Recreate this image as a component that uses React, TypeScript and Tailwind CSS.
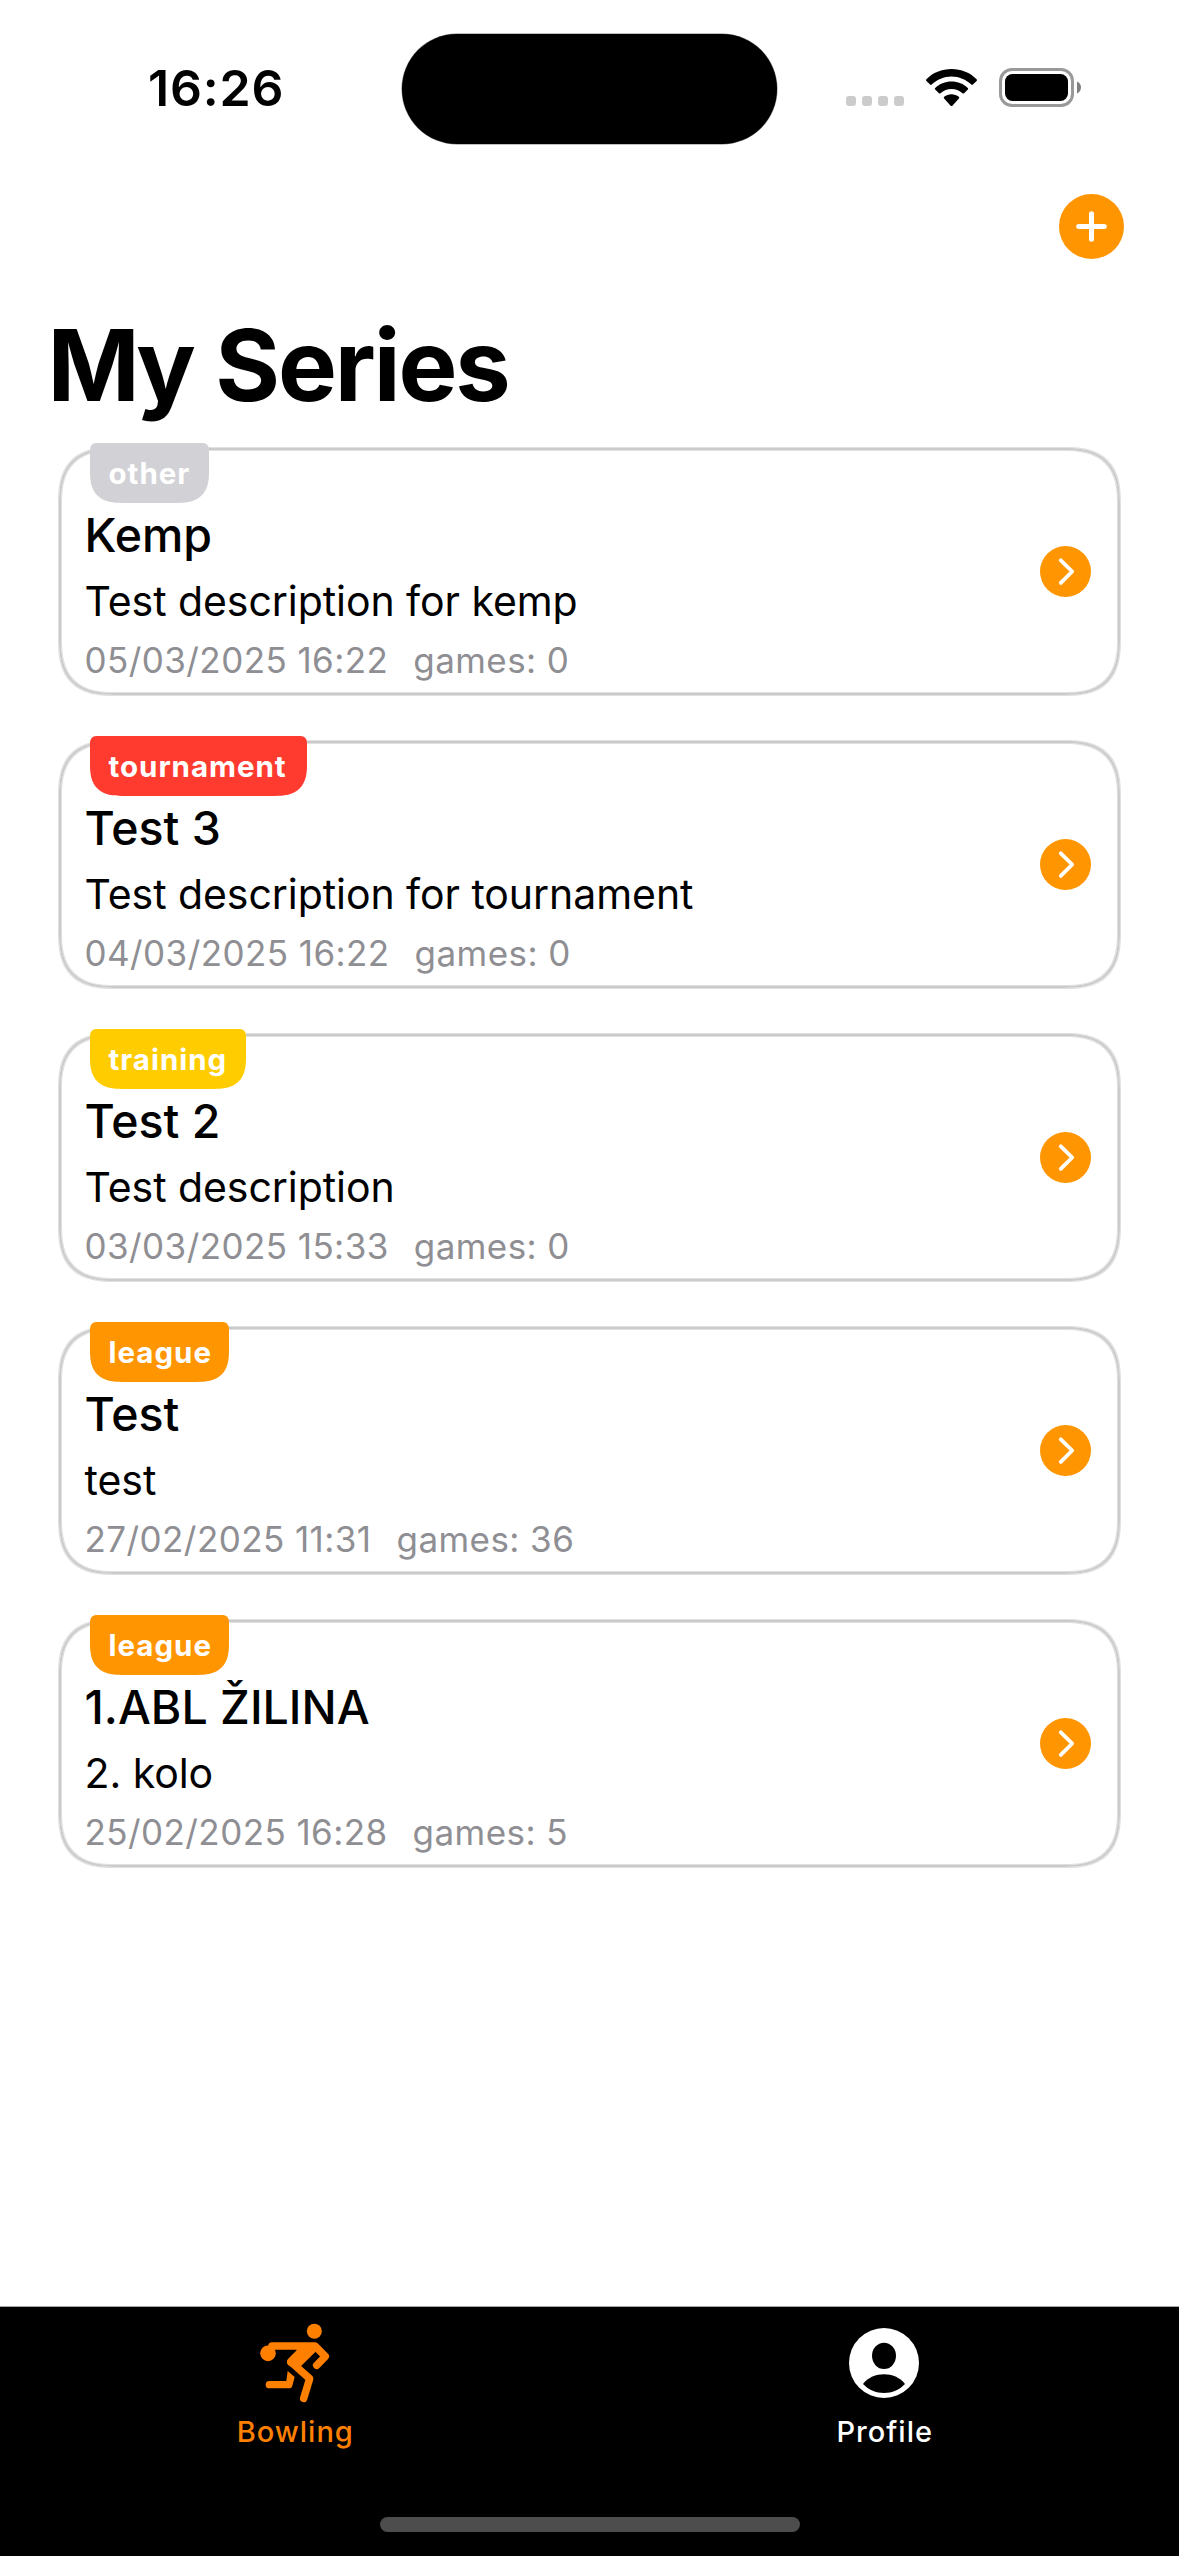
import type { ReactNode } from "react";

type Series = {
  kind: string;
  badge: string;
  title: string;
  description: string;
  date: string;
  games: number;
};

const SERIES: Series[] = [
  {
    kind: "other",
    badge: "w-[119px] bg-[#d1d1d6]",
    title: "Kemp",
    description: "Test description for kemp",
    date: "05/03/2025 16:22",
    games: 0,
  },
  {
    kind: "tournament",
    badge: "w-[217px] bg-[#ff3b30]",
    title: "Test 3",
    description: "Test description for tournament",
    date: "04/03/2025 16:22",
    games: 0,
  },
  {
    kind: "training",
    badge: "w-[156px] bg-[#ffcc00]",
    title: "Test 2",
    description: "Test description",
    date: "03/03/2025 15:33",
    games: 0,
  },
  {
    kind: "league",
    badge: "w-[139px] bg-[#ff9500]",
    title: "Test",
    description: "test",
    date: "27/02/2025 11:31",
    games: 36,
  },
  {
    kind: "league",
    badge: "w-[139px] bg-[#ff9500]",
    title: "1.ABL ŽILINA",
    description: "2. kolo",
    date: "25/02/2025 16:28",
    games: 5,
  },
];

function WifiIcon() {
  return (
    <svg className="h-[38px] w-[51px]" viewBox="0 0 51 38" fill="black">
      <path d="M25.5 0C35.2 0 44.2 3.7 50.6 10.2c.5.5.5 1.2 0 1.7l-3.7 3.7c-.4.4-1.1.4-1.6 0C40 10.400 33 7.400 25.500 7.400S11 10.400 5.700 15.600c-.5.4-1.200.4-1.600 0L.4 11.900c-.5-.5-.5-1.200 0-1.700C6.800 3.700 15.800 0 25.500 0Z" />
      <path d="M25.500 12.600c6.300 0 12 2.400 16.300 6.300.5.500.5 1.200 0 1.700l-3.700 3.700c-.4.4-1.100.4-1.600 0a16.400 16.400 0 0 0-22 0c-.5.4-1.200.4-1.600 0l-3.700-3.700c-.5-.5-.5-1.200 0-1.700 4.300-3.900 10-6.300 16.300-6.300Z" />
      <path d="M25.500 25.300c2.800 0 5.300.9 7.300 2.500.5.400.5 1.200.1 1.700l-6.500 7.200c-.5.500-1.300.5-1.800 0l-6.500-7.200c-.4-.5-.4-1.300.1-1.700 2-1.600 4.500-2.500 7.300-2.500Z" />
    </svg>
  );
}

function BatteryIcon() {
  return (
    <svg className="h-[39px] w-[82px]" viewBox="0 0 82 39">
      <rect x="1.5" y="1.500" width="72" height="36" rx="11.500" fill="none" stroke="#999" strokeWidth="3" />
      <rect x="6" y="6" width="63" height="27" rx="7.500" fill="black" />
      <path d="M78 13.500c2.400 1 4 3.300 4 6s-1.600 5-4 6Z" fill="#808080" />
    </svg>
  );
}

function StatusBar() {
  return (
    <header className="flex h-[177px] items-start">
      <div className="w-[402px] pl-[148px] pt-[58px] text-[50px] font-semibold leading-[60px] tracking-[0.850px]">
        16:26
      </div>
      <div className="mt-[34px] h-[110px] w-[375px] rounded-full bg-black shadow-[0_0_0_0.500px_rgba(0,0,0,0.5)]" />
      <div className="flex pl-[69px] pt-[68px]">
        <div className="flex gap-[6px] pt-[28px]">
          <span className="size-[10px] rounded-[3px] bg-[#ccc]" />
          <span className="size-[10px] rounded-[3px] bg-[#ccc]" />
          <span className="size-[10px] rounded-[3px] bg-[#ccc]" />
          <span className="size-[10px] rounded-[3px] bg-[#ccc]" />
        </div>
        <div className="ml-[22px] pt-px">
          <WifiIcon />
        </div>
        <div className="ml-[22px]">
          <BatteryIcon />
        </div>
      </div>
    </header>
  );
}

function SeriesCard({ series }: { series: Series }) {
  return (
    <article className="relative flex h-[247px] items-center justify-between rounded-[56px] border-2 border-[#cbcbcb] pl-[23.500px] pr-[27px] shadow-[0_0_0_1px_rgba(204,204,204,0.6),inset_0_0_0_1px_rgba(204,204,204,0.6)] [corner-shape:superellipse(1.4)]">
      <span
        className={`absolute -top-[7px] left-[29px] h-[60px] whitespace-nowrap rounded-b-[32px] rounded-t-[8px] pl-[18.500px] text-[29.500px] font-bold leading-[60px] tracking-[0.980px] text-white [corner-shape:superellipse(1.4)] ${series.badge}`}
      >
        {series.kind}
      </span>
      <div className="self-start pt-[57px]">
        <h2 className="text-[46.500px] font-medium leading-[56px]">{series.title}</h2>
        <p className="mt-[13px] text-[41px] leading-[50px] tracking-[-0.060px]">{series.description}</p>
        <div className="mt-3 flex gap-[25px] text-[35px] leading-[44px] tracking-[0.430px] text-[#8e8e93]">
          <span>{series.date}</span>
          <span>games: {series.games}</span>
        </div>
      </div>
      <button className="size-[51px]" aria-label={`Open ${series.title}`}>
        <svg className="size-[51px]" viewBox="0 0 51 51" fill="none">
          <circle cx="25.500" cy="25.500" r="25.500" fill="#ff9500" />
          <path d="M20.800 14.300 32.200 25.500 20.800 36.900" stroke="white" strokeWidth="3.800" strokeLinecap="round" strokeLinejoin="round" />
        </svg>
      </button>
    </article>
  );
}

function BowlerIcon() {
  return (
    <svg className="h-[82px] w-[71px]" viewBox="119 96 213 246" fill="#ff8000" stroke="#ff8000" strokeLinecap="round" strokeLinejoin="round">
      <circle cx="285" cy="123.500" r="22.500" stroke="none" />
      <circle cx="146" cy="190" r="23.500" stroke="none" />
      <path d="M158 168H287L318 199 292 226" fill="none" strokeWidth="22.500" />
      <path d="M228 165H290L288 186 246 227 222 232C208 228 202 222 203 215 203 210 205 208 209 204L232 181Z" stroke="none" />
      <path d="M215 216 271 266 253 325" fill="none" strokeWidth="22.500" />
      <path d="M205 243 226 261 219 287Q217 295 208 295H150A11 11 0 0 1 150 273H201Z" stroke="none" />
    </svg>
  );
}

function ProfileIcon() {
  return (
    <svg className="size-[70px]" viewBox="0 0 210 210">
      <circle cx="105" cy="105" r="105" fill="white" />
      <ellipse cx="105" cy="83.500" rx="36" ry="39.500" fill="black" />
      <path d="M42 168C58 148 81 139 105 139S152 148 168 168C151 186 129 195 105 195S59 186 42 168Z" fill="black" />
    </svg>
  );
}

function Tab({ label, color, children }: { label: string; color: string; children: ReactNode }) {
  return (
    <div className="flex flex-1 flex-col items-center pt-[15px]">
      <div className="flex h-[82px] items-center">{children}</div>
      <span className={`mt-[9px] pl-px text-[29px] font-medium leading-[37px] tracking-[1px] ${color}`}>{label}</span>
    </div>
  );
}

export default function App() {
  return (
    <div className="flex h-[2556px] w-[1179px] flex-col overflow-hidden bg-white font-['Inter',sans-serif] text-black">
      <StatusBar />
      <nav className="flex h-[99px] items-center justify-end pr-[55px]">
        <button className="size-[65px]" aria-label="Add series">
          <svg className="size-[65px]" viewBox="0 0 65 65" fill="none">
            <circle cx="32.500" cy="32.500" r="32.500" fill="#ff9500" />
            <path d="M32.500 19.700v25.600M19.700 32.500h25.600" stroke="white" strokeWidth="5" strokeLinecap="round" />
          </svg>
        </button>
      </nav>
      <h1 className="mt-[29px] pl-[47.500px] text-[99px] font-bold leading-[120px] tracking-[-2.100px] [word-spacing:2.500px]">
        <span className="tracking-[-4.500px]">My</span> Series
      </h1>
      <main className="mt-[23px] flex flex-1 flex-col gap-[46px] px-[59px]">
        {SERIES.map((series) => (
          <SeriesCard key={series.date} series={series} />
        ))}
      </main>
      <footer className="flex h-[250px] flex-col items-center justify-between border-t border-[#a6a6a6] bg-black pb-6">
        <div className="flex w-full">
          <Tab label="Bowling" color="text-[#ff8000]">
            <BowlerIcon />
          </Tab>
          <Tab label="Profile" color="text-white">
            <ProfileIcon />
          </Tab>
        </div>
        <div className="h-[15px] w-[420px] rounded-full bg-[#4d4d4d]" />
      </footer>
    </div>
  );
}
